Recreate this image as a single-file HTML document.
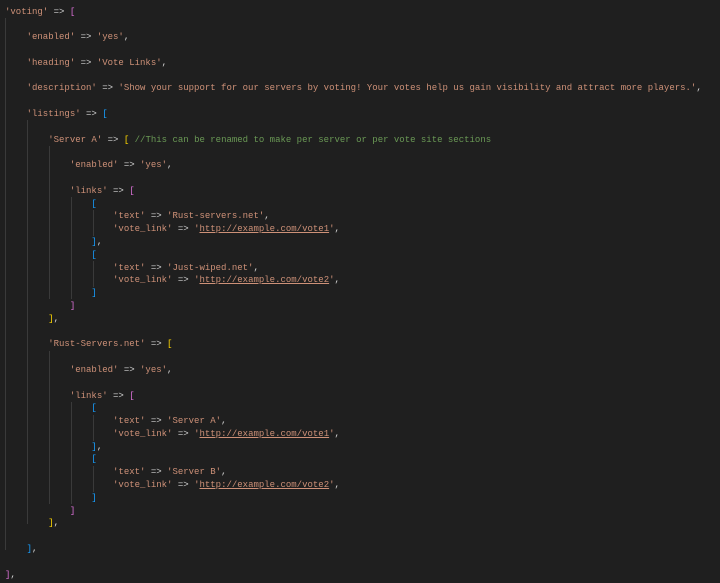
<!DOCTYPE html>
<html><head><style>
html,body{margin:0;padding:0;background:#1f1f1f;width:720px;height:583px;overflow:hidden}
#c{position:absolute;left:5px;top:5.6px;font-family:"Liberation Mono",monospace;font-size:9px;line-height:12.8px;white-space:pre;color:#d4d4d4}
.s{color:#ce9178}.p{color:#da70d6}.b{color:#179fff}.y{color:#ffd700}.g{color:#6a9955}.u{text-decoration:underline}
.gd{position:absolute;width:1px;background:#3a3a3a}
</style></head><body>
<div class="gd" style="left:5px;top:18px;height:532px"></div>
<div class="gd" style="left:27px;top:120px;height:404px"></div>
<div class="gd" style="left:49px;top:146px;height:153px"></div>
<div class="gd" style="left:71px;top:197px;height:102px"></div>
<div class="gd" style="left:93px;top:210px;height:26px"></div>
<div class="gd" style="left:93px;top:261px;height:26px"></div>
<div class="gd" style="left:49px;top:351px;height:153px"></div>
<div class="gd" style="left:71px;top:402px;height:102px"></div>
<div class="gd" style="left:93px;top:415px;height:26px"></div>
<div class="gd" style="left:93px;top:466px;height:26px"></div>
<div id="c"><span class="s">'voting'</span> =&gt; <span class="p">[</span>

    <span class="s">'enabled'</span> =&gt; <span class="s">'yes'</span>,

    <span class="s">'heading'</span> =&gt; <span class="s">'Vote Links'</span>,

    <span class="s">'description'</span> =&gt; <span class="s">'Show your support for our servers by voting! Your votes help us gain visibility and attract more players.'</span>,

    <span class="s">'listings'</span> =&gt; <span class="b">[</span>

        <span class="s">'Server A'</span> =&gt; <span class="y">[</span> <span class="g">//This can be renamed to make per server or per vote site sections</span>

            <span class="s">'enabled'</span> =&gt; <span class="s">'yes'</span>,

            <span class="s">'links'</span> =&gt; <span class="p">[</span>
                <span class="b">[</span>
                    <span class="s">'text'</span> =&gt; <span class="s">'Rust-servers.net'</span>,
                    <span class="s">'vote_link'</span> =&gt; <span class="s">'<span class="u">http://example.com/vote1</span>'</span>,
                <span class="b">]</span>,
                <span class="b">[</span>
                    <span class="s">'text'</span> =&gt; <span class="s">'Just-wiped.net'</span>,
                    <span class="s">'vote_link'</span> =&gt; <span class="s">'<span class="u">http://example.com/vote2</span>'</span>,
                <span class="b">]</span>
            <span class="p">]</span>
        <span class="y">]</span>,

        <span class="s">'Rust-Servers.net'</span> =&gt; <span class="y">[</span>

            <span class="s">'enabled'</span> =&gt; <span class="s">'yes'</span>,

            <span class="s">'links'</span> =&gt; <span class="p">[</span>
                <span class="b">[</span>
                    <span class="s">'text'</span> =&gt; <span class="s">'Server A'</span>,
                    <span class="s">'vote_link'</span> =&gt; <span class="s">'<span class="u">http://example.com/vote1</span>'</span>,
                <span class="b">]</span>,
                <span class="b">[</span>
                    <span class="s">'text'</span> =&gt; <span class="s">'Server B'</span>,
                    <span class="s">'vote_link'</span> =&gt; <span class="s">'<span class="u">http://example.com/vote2</span>'</span>,
                <span class="b">]</span>
            <span class="p">]</span>
        <span class="y">]</span>,

    <span class="b">]</span>,

<span class="p">]</span>,</div>
</body></html>
